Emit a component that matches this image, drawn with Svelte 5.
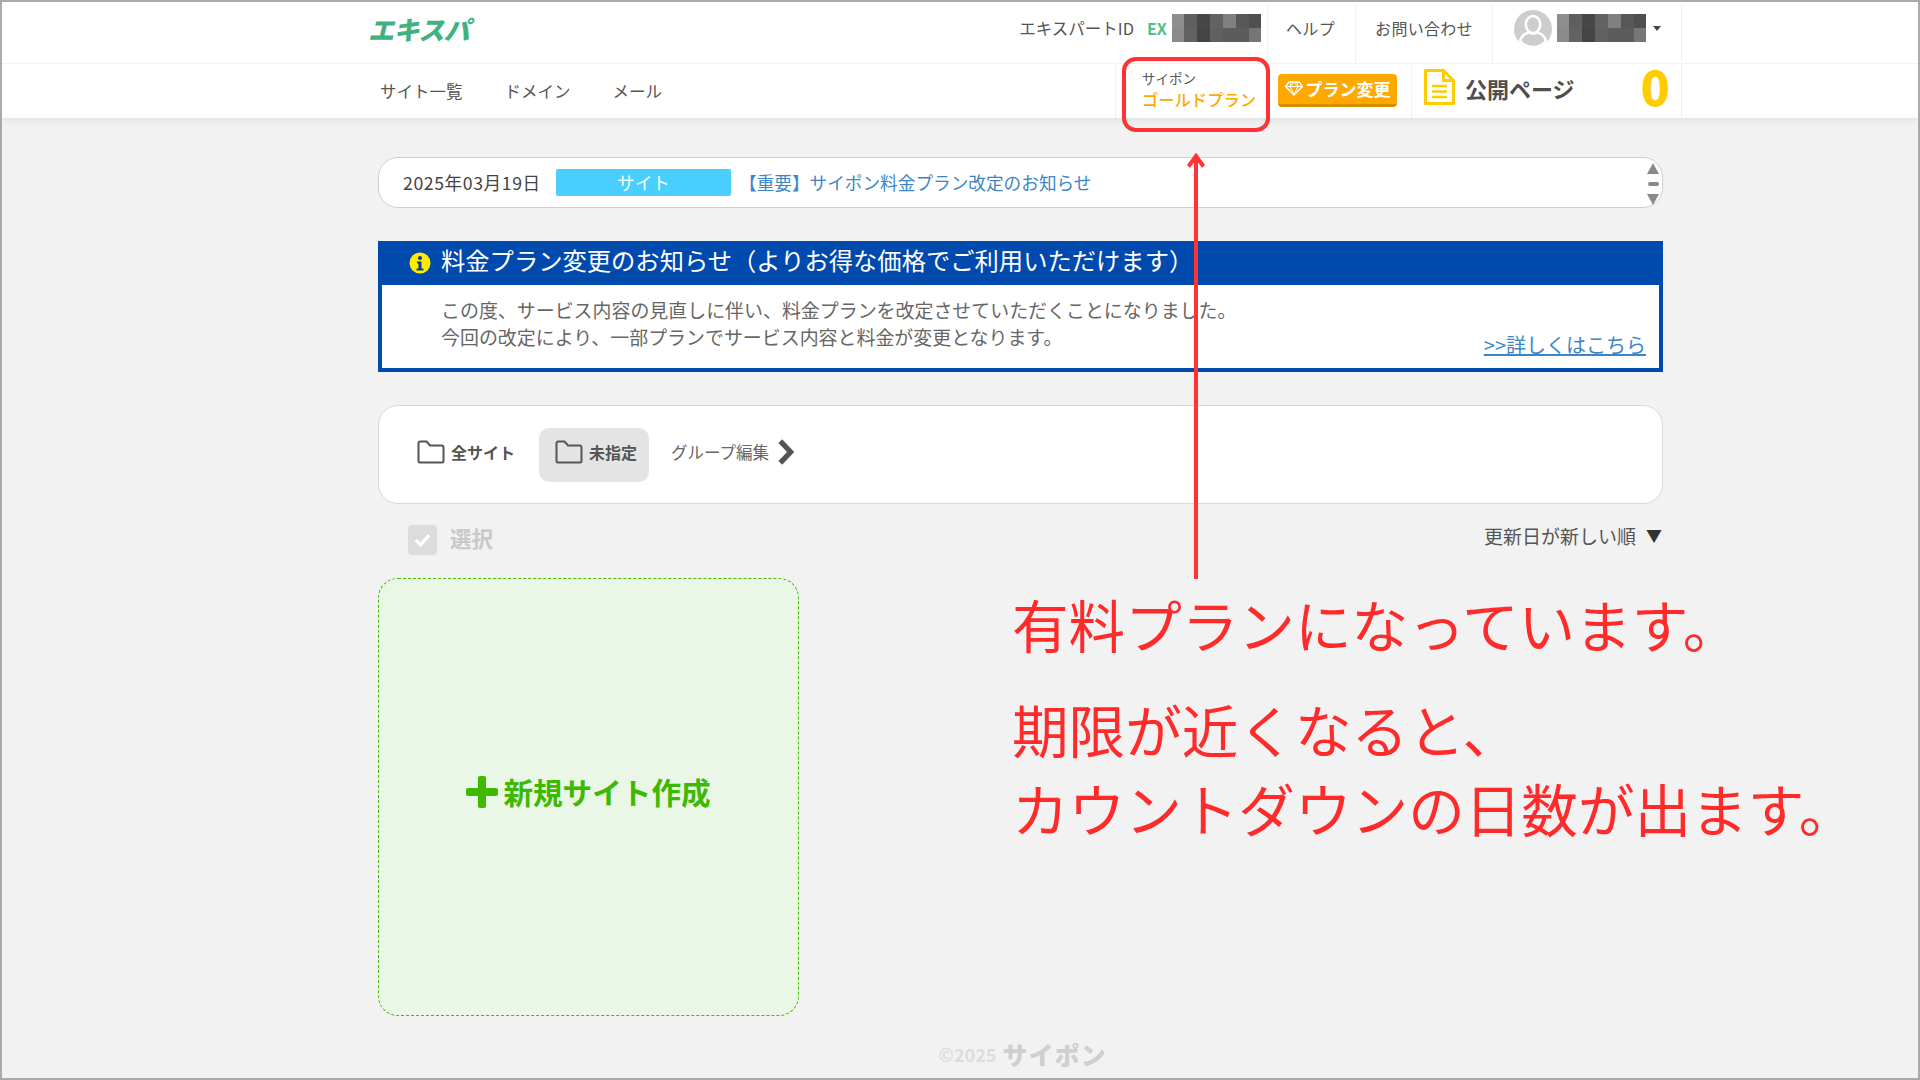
<script>
  const rowA = ['#8e8e8e','#5f5f5f','#474747','#636363','#808080','#575757','#4f4f4f','#8a8a8a'];
  const rowB = ['#8a8a8a','#626262','#444444','#606060','#5c5c5c','#5c5c5c','#767676','#929292'];
  const mosaic = [...rowA, ...rowB];
</script>

<div class="frame">
  <header class="header">
    <div class="row-top">
      <div class="logo">エキスパ</div>
      <div class="top-right">
        <div class="id-box">
          <span class="id-label">エキスパートID</span>
          <span class="id-ex">EX</span>
          <div class="mosaic">
            {#each mosaic as c}<span style="background:{c}"></span>{/each}
          </div>
        </div>
        <a class="top-link help">ヘルプ</a>
        <a class="top-link contact">お問い合わせ</a>
        <div class="user">
          <svg class="avatar" viewBox="0 0 38 38">
            <circle cx="19" cy="19" r="19" fill="#cdcdcd"/>
            <ellipse cx="19" cy="14.5" rx="7.2" ry="8.5" fill="none" stroke="#fff" stroke-width="2.6"/>
            <path d="M6 31c1-5 6-8 9-8.5 2 1.500 6 1.500 8 0 3 .5 8 3.500 9 8.500-3 3.500-8 6-13 6s-10-2.500-13-6z" fill="none" stroke="#fff" stroke-width="2.600"/>
          </svg>
          <div class="mosaic">
            {#each mosaic as c}<span style="background:{c}"></span>{/each}
          </div>
          <span class="caret"></span>
        </div>
      </div>
    </div>
    <div class="row-nav">
      <nav class="nav">
        <a>サイト一覧</a>
        <a>ドメイン</a>
        <a>メール</a>
      </nav>
      <div class="nav-right">
        <div class="plan">
          <span class="plan-small">サイポン</span>
          <span class="plan-name">ゴールドプラン</span>
        </div>
        <button class="plan-btn">
          <svg viewBox="0 0 18 15" width="18" height="15">
            <path d="M4 1h10l3.500 4.500L9 14 .5 5.500z" fill="none" stroke="#fff" stroke-width="1.500" stroke-linejoin="round"/>
            <path d="M1 5.500h16M6 1.500 5 5.500 9 13l4-7.500-1-4M5 5.500l4-4 4 4" fill="none" stroke="#fff" stroke-width="1"/>
          </svg>
          プラン変更
        </button>
        <div class="pages">
          <svg class="doc" viewBox="0 0 31 36">
            <path d="M1.500 1.500h18l10 10v23h-28z" fill="#fff" stroke="#ffcc00" stroke-width="3" stroke-linejoin="round"/>
            <path d="M19.500 1.500v10h10" fill="none" stroke="#ffcc00" stroke-width="3" stroke-linejoin="round"/>
            <path d="M8 17h15M8 22.500h15M8 28h15" stroke="#ffcc00" stroke-width="2.600"/>
          </svg>
          <span class="pages-label">公開ページ</span>
          <span class="pages-count">0</span>
        </div>
      </div>
    </div>
  </header>

  <main class="main">
    <section class="news">
      <span class="news-date">2025年03月19日</span>
      <span class="news-tag">サイト</span>
      <a class="news-link">【重要】サイポン料金プラン改定のお知らせ</a>
      <div class="news-scroll">
        <span class="tri up"></span>
        <span class="dash"></span>
        <span class="tri down"></span>
      </div>
    </section>

    <section class="notice">
      <h2 class="notice-head">
        <svg viewBox="0 0 22 22" width="22" height="22">
          <circle cx="11" cy="11" r="10.500" fill="#ffeb00"/>
          <circle cx="11" cy="6" r="2" fill="#0b3f8f"/>
          <path d="M8 9.500h4.500v7H14.500v2H7.500v-2h2v-5H8z" fill="#0b3f8f"/>
        </svg>
        <span class="notice-title">料金プラン変更のお知らせ（よりお得な価格でご利用いただけます）</span>
      </h2>
      <div class="notice-body">
        <p>この度、サービス内容の見直しに伴い、料金プランを改定させていただくことになりました。<br>今回の改定により、一部プランでサービス内容と料金が変更となります。</p>
        <a class="notice-more">&gt;&gt;詳しくはこちら</a>
      </div>
    </section>

    <section class="groups">
      <a class="group">
        <svg class="folder" viewBox="0 0 28 24"><path d="M1.500 21V3.500q0-2 2-2h6l3.500 4h11.500q2 0 2 2V21q0 1.500-1.500 1.500H3q-1.500 0-1.500-1.500z" fill="none" stroke="#555" stroke-width="2"/></svg>
        全サイト
      </a>
      <a class="group active">
        <svg class="folder" viewBox="0 0 28 24"><path d="M1.500 21V3.500q0-2 2-2h6l3.500 4h11.500q2 0 2 2V21q0 1.500-1.500 1.500H3q-1.500 0-1.500-1.500z" fill="none" stroke="#555" stroke-width="2"/></svg>
        未指定
      </a>
      <a class="group-edit">
        グループ編集
        <svg viewBox="0 0 17 27" width="18" height="28"><path d="M3 3l10 10.500L3 24" fill="none" stroke="#555" stroke-width="5"/></svg>
      </a>
    </section>

    <div class="tools">
      <label class="select">
        <span class="check">
          <svg viewBox="0 0 30 30" width="29" height="30"><path d="M8 15l5 5 9-10" fill="none" stroke="#fff" stroke-width="3.500"/></svg>
        </span>
        <span class="select-text">選択</span>
      </label>
      <div class="sort">更新日が新しい順<span class="sort-arrow">▼</span></div>
    </div>

    <a class="new-site">
      <svg viewBox="0 0 32 32" width="32" height="32"><path d="M12 2q0-2 2-2h4q2 0 2 2v10h10q2 0 2 2v4q0 2-2 2H20v10q0 2-2 2h-4q-2 0-2-2V20H2q-2 0-2-2v-4q0-2 2-2h10z" fill="#3cb900"/></svg>
      新規サイト作成
    </a>

    <footer class="footer">
      <span class="copy">©2025</span>
      <span class="brand">サイポン</span>
    </footer>
  </main>

  <div class="highlight"></div>
  <svg class="arrow" viewBox="0 0 24 426" width="24" height="426">
    <path d="M12 426V3" stroke="#ff3333" stroke-width="4" fill="none"/>
    <path d="M4.500 13.500 12 3l7.500 10.500" stroke="#ff3333" stroke-width="4" fill="none"/>
  </svg>
  <div class="note note-one">有料プランになっています。</div>
  <div class="note note-two">期限が近くなると、<br>カウントダウンの日数が出ます。</div>
</div>

<style>
  :global(body) {
    margin: 0;
    background: #f2f2f2;
  }
  .frame {
    position: relative;
    box-sizing: border-box;
    width: 1920px;
    height: 1080px;
    overflow: hidden;
    border: 2px solid #aaaaaa;
    background: #f2f2f2;
    color: #555;
    font-family: "Noto Sans CJK JP", "Noto Sans", sans-serif;
  }
  a { text-decoration: none; color: inherit; }

  .header {
    background: #fff;
    box-shadow: 0 2px 8px rgba(0, 0, 0, 0.08);
  }
  .row-top {
    display: flex;
    align-items: center;
    justify-content: space-between;
    box-sizing: border-box;
    height: 62px;
    padding-left: 366px;
    padding-right: 236px;
    border-bottom: 1px solid #f3f3f3;
  }
  .logo {
    font-size: 26px;
    line-height: 1;
    font-weight: 900;
    font-style: italic;
    color: #3fb27f;
    letter-spacing: -0.5px;
    margin-bottom: 8px;
  }
  .top-right {
    display: flex;
    align-items: stretch;
    height: 58px;
  }
  .id-box {
    display: flex;
    align-items: center;
    box-sizing: border-box;
    padding: 0 6px 9px 0;
    font-size: 16.500px;
    border-right: 1px solid #f0f0f0;
  }
  .id-label { margin-right: 13px; }
  .id-ex { width: 25px; font-weight: 700; color: #4fbf8a; font-size: 16px; }
  .mosaic {
    display: grid;
    grid-template-columns: 12px repeat(6, 13px) 12px;
    grid-template-rows: 14px 14px;
    width: 89px;
    overflow: hidden;
    align-self: center;
  }
  .top-link {
    display: flex;
    align-items: center;
    justify-content: center;
    box-sizing: border-box;
    padding-bottom: 9px;
    font-size: 16px;
    border-right: 1px solid #f0f0f0;
    letter-spacing: 0.3px;
  }
  .help { width: 88px; padding-right: 2px; }
  .contact { width: 137px; }
  .user {
    display: flex;
    align-items: center;
    width: 189px;
    padding: 0 0 9px 21px;
    box-sizing: border-box;
    border-right: 1px solid #f0f0f0;
  }
  .avatar { width: 38px; height: 38px; margin: 2px 5px 0 0; }
  .caret {
    width: 0;
    height: 0;
    margin-left: 7px;
    border-left: 4.500px solid transparent;
    border-right: 4.500px solid transparent;
    border-top: 5px solid #444;
  }

  .row-nav {
    display: flex;
    justify-content: space-between;
    height: 54px;
    padding-left: 378px;
    padding-right: 236px;
  }
  .nav {
    display: flex;
    align-items: center;
    gap: 42px;
    font-size: 16.500px;
  }
  .nav-right { display: flex; align-items: stretch; }
  .plan {
    display: flex;
    flex-direction: column;
    justify-content: center;
    width: 163px;
    box-sizing: border-box;
    padding: 0 0 4px 26px;
    border-left: 1px solid #f0f0f0;
  }
  .plan-small { font-size: 13.500px; line-height: 19px; }
  .plan-name { font-size: 16.300px; line-height: 22px; color: #ffa800; font-weight: 500; }
  .plan-btn {
    display: flex;
    align-items: center;
    justify-content: center;
    gap: 3px;
    align-self: center;
    box-sizing: border-box;
    width: 119px;
    height: 33px;
    margin: 0 0 2px;
    padding: 0;
    border: 0;
    border-bottom: 3px solid #d68d00;
    border-radius: 4px;
    background: #ffa800;
    color: #fff;
    font-family: inherit;
    font-size: 17px;
    font-weight: 700;
  }
  .pages {
    display: flex;
    align-items: center;
    box-sizing: border-box;
    width: 271px;
    margin-left: 14px;
    padding-left: 12px;
    border-left: 1px solid #f0f0f0;
    border-right: 1px solid #f0f0f0;
  }
  .doc { width: 31px; height: 36px; margin-right: 10px; margin-bottom: 9px; }
  .pages-label {
    font-size: 22px;
    font-weight: 700;
    margin-bottom: 7px;
    color: #4f4f4f;
  }
  .pages-count {
    margin-left: auto;
    margin-right: 11px;
    margin-bottom: 12px;
    font-size: 48px;
    line-height: 1;
    font-weight: 900;
    color: #ffcc00;
  }

  .main {
    display: flex;
    flex-direction: column;
    width: 1285px;
    margin-left: 376px;
  }
  .news {
    display: flex;
    align-items: center;
    box-sizing: border-box;
    height: 51px;
    margin-top: 39px;
    padding-left: 24px;
    background: #fff;
    border: 1px solid #cfcfcf;
    border-radius: 20px;
    font-size: 17.650px;
    position: relative;
  }
  .news-date { width: 153px; color: #444; letter-spacing: 0.6px; }
  .news-tag {
    width: 175px;
    height: 27px;
    line-height: 27px;
    text-align: center;
    background: #48cfff;
    color: #fff;
    border-radius: 2px;
    margin-right: 8px;
  }
  .news-link { color: #3d86c6; }
  .news-scroll {
    position: absolute;
    right: 3px;
    top: 5px;
    display: flex;
    flex-direction: column;
    align-items: center;
    gap: 8px;
  }
  .tri {
    width: 0;
    height: 0;
    border-left: 6px solid transparent;
    border-right: 6px solid transparent;
  }
  .tri.up { border-bottom: 11px solid #8a8a8a; }
  .tri.down { border-top: 11px solid #8a8a8a; }
  .dash { width: 11px; height: 4px; border-radius: 2px; background: #8a8a8a; }

  .notice {
    box-sizing: border-box;
    height: 131px;
    margin-top: 33px;
    border: 4px solid #004aad;
    border-top: 0;
    background: #fff;
  }
  .notice-head {
    display: flex;
    align-items: center;
    gap: 10px;
    height: 44px;
    margin: 0 -4px;
    padding-left: 31px;
    background: #004aad;
    color: #fff;
    font-size: 24.300px;
    font-weight: 400;
  }
  .notice-title { margin-top: -7px; }
  .notice-body {
    position: relative;
    padding: 11px 0 0 59px;
  }
  .notice-body p {
    margin: 0;
    font-size: 18.950px;
    line-height: 27px;
    color: #666;
  }
  .notice-more {
    position: absolute;
    right: 13px;
    top: 46px;
    font-size: 20px;
    line-height: 28px;
    color: #3d86c6;
    text-decoration: underline;
  }

  .groups {
    display: flex;
    align-items: center;
    box-sizing: border-box;
    height: 99px;
    margin-top: 33px;
    padding-left: 21px;
    background: #fff;
    border: 1px solid #d9d9d9;
    border-radius: 20px;
  }
  .group {
    display: flex;
    align-items: center;
    gap: 6px;
    box-sizing: border-box;
    height: 54px;
    padding: 0 11px 5px 17px;
    border-radius: 10px;
    font-size: 16px;
    font-weight: 700;
  }
  .group:first-child { padding: 0 24px 5px 17px; }
  .group.active { background: #e4e4e4; width: 110px; padding-left: 16px; }
  .folder { width: 28px; height: 24px; }
  .group-edit {
    display: flex;
    align-items: center;
    gap: 8px;
    margin: 0 0 5px 22px;
    font-size: 16.500px;
    color: #666;
  }

  .tools {
    display: flex;
    justify-content: space-between;
    height: 74px;
    box-sizing: border-box;
    padding: 21px 0 0 30px;
  }
  .select {
    display: flex;
    align-items: center;
    gap: 13px;
    height: 30px;
    font-size: 21.500px;
    font-weight: 700;
    color: #c9c9c9;
  }
  .select-text { margin-top: -5px; }
  .check {
    display: block;
    width: 29px;
    height: 30px;
    background: #dcdcdc;
    border-radius: 4px;
  }
  .sort {
    display: flex;
    align-items: center;
    height: 20px;
    font-size: 19px;
    color: #555;
  }
  .sort-arrow { margin: 0 1px 0 10px; font-size: 16px; color: #333; }

  .new-site {
    display: flex;
    align-items: center;
    justify-content: center;
    gap: 5px;
    box-sizing: border-box;
    width: 421px;
    height: 438px;
    padding-bottom: 11px;
    background: #eaf7e6;
    border: 1px dashed #3fbf00;
    border-radius: 20px;
    color: #3cb900;
    font-size: 29.600px;
    font-weight: 700;
  }

  .footer {
    display: flex;
    align-items: center;
    justify-content: center;
    gap: 6px;
    height: 30px;
    margin: 23px 0 0 4px;
    font-weight: 700;
  }
  .copy { font-size: 18px; color: #dcdcdc; }
  .brand { font-size: 25px; font-weight: 900; color: #cfcfcf; letter-spacing: 1px; }

  .highlight {
    position: absolute;
    left: 1120px;
    top: 55px;
    box-sizing: border-box;
    width: 148px;
    height: 75px;
    border: 4px solid #ff3333;
    border-radius: 14px;
  }
  .arrow {
    position: absolute;
    left: 1182px;
    top: 151px;
  }
  .note {
    position: absolute;
    left: 1010px;
    font-size: 56.600px;
    color: #ff2a2a;
    white-space: nowrap;
  }
  .note-one { top: 581px; line-height: 80px; }
  .note-two { top: 687px; line-height: 79px; }
</style>
